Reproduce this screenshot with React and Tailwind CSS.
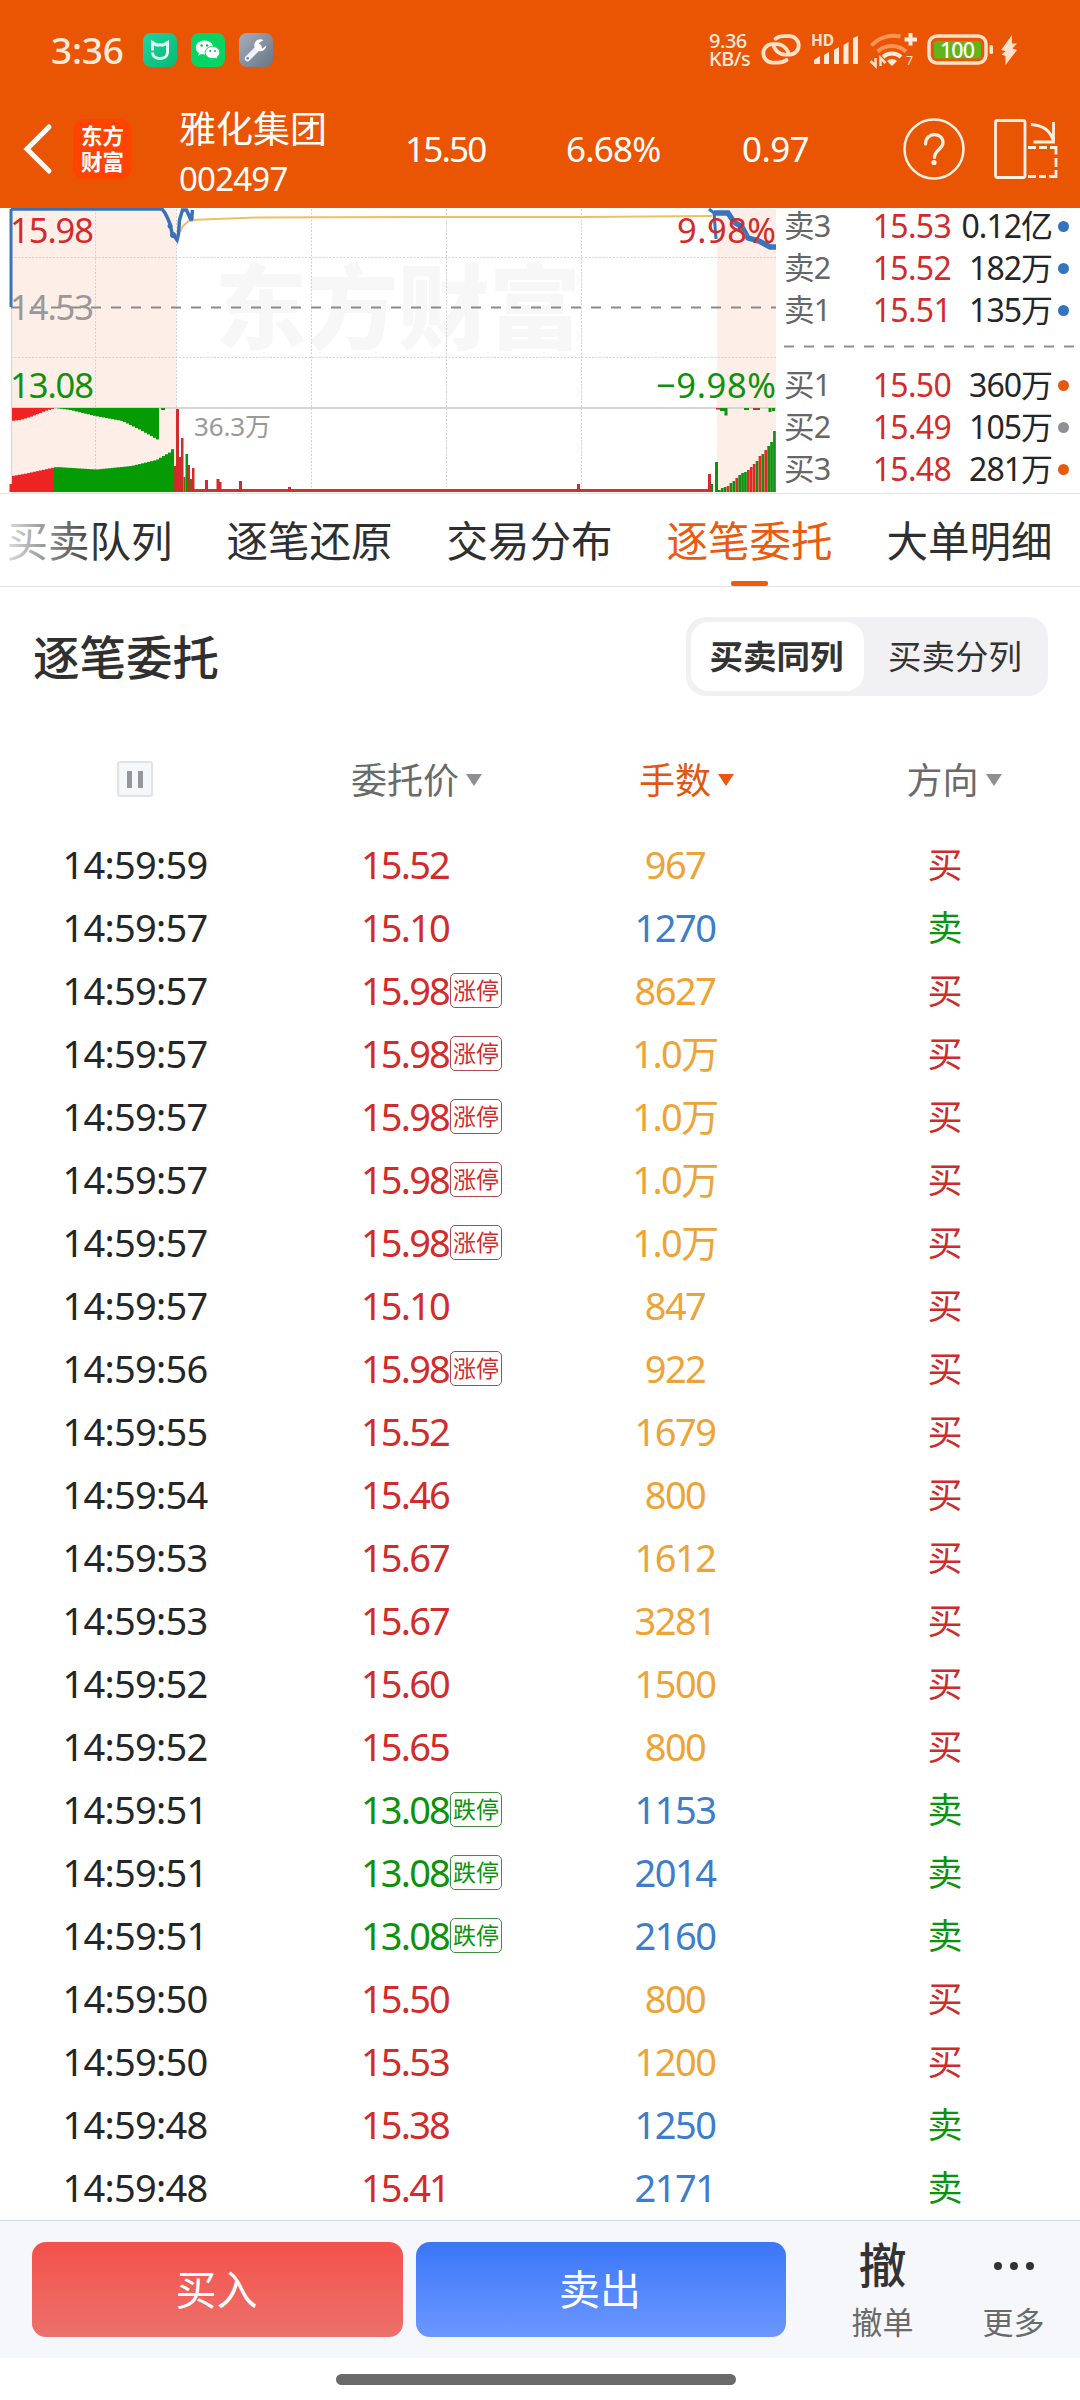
import React from "react";

const RED = "#d32b2b";
const GREEN = "#0b930b";

const orders = [
  ["14:59:59", "15.52", "", "967", "买"],
  ["14:59:57", "15.10", "", "1270", "卖"],
  ["14:59:57", "15.98", "涨停", "8627", "买"],
  ["14:59:57", "15.98", "涨停", "1.0万", "买"],
  ["14:59:57", "15.98", "涨停", "1.0万", "买"],
  ["14:59:57", "15.98", "涨停", "1.0万", "买"],
  ["14:59:57", "15.98", "涨停", "1.0万", "买"],
  ["14:59:57", "15.10", "", "847", "买"],
  ["14:59:56", "15.98", "涨停", "922", "买"],
  ["14:59:55", "15.52", "", "1679", "买"],
  ["14:59:54", "15.46", "", "800", "买"],
  ["14:59:53", "15.67", "", "1612", "买"],
  ["14:59:53", "15.67", "", "3281", "买"],
  ["14:59:52", "15.60", "", "1500", "买"],
  ["14:59:52", "15.65", "", "800", "买"],
  ["14:59:51", "13.08", "跌停", "1153", "卖"],
  ["14:59:51", "13.08", "跌停", "2014", "卖"],
  ["14:59:51", "13.08", "跌停", "2160", "卖"],
  ["14:59:50", "15.50", "", "800", "买"],
  ["14:59:50", "15.53", "", "1200", "买"],
  ["14:59:48", "15.38", "", "1250", "卖"],
  ["14:59:48", "15.41", "", "2171", "卖"],
];

const asks = [
  ["卖3", "15.53", "0.12亿", "bg-[#3473be]"],
  ["卖2", "15.52", "182万", "bg-[#3473be]"],
  ["卖1", "15.51", "135万", "bg-[#3473be]"],
];

const bids = [
  ["买1", "15.50", "360万", "bg-[#e65a0c]"],
  ["买2", "15.49", "105万", "bg-[#8f8f96]"],
  ["买3", "15.48", "281万", "bg-[#e65a0c]"],
];

const tabs = ["买卖队列", "逐笔还原", "交易分布", "逐笔委托", "大单明细"];

function StatusBar() {
  return (
    <div className="flex h-[100px] items-center pl-[51px] text-[#ffeadb]">
      <span className="w-[92px] text-[37px] font-medium tracking-[-0.2px]">3:36</span>
      <div className="flex gap-[14px]">
        <svg width="34" height="34" viewBox="0 0 34 34">
          <defs>
            <linearGradient id="mi" x1="0" y1="0" x2="1" y2="1">
              <stop offset="0" stopColor="#1fd5a0" />
              <stop offset="1" stopColor="#08b872" />
            </linearGradient>
          </defs>
          <rect width="34" height="34" rx="8" fill="url(#mi)" />
          <path d="M9.500 17.500V9.500l4 2.500h7l4-2.500v8" fill="none" stroke="#dffff3" strokeWidth="3" />
          <path d="M9.500 19.500c.5 8 14.500 8 15 0v-3" fill="none" stroke="#dffff3" strokeWidth="3" />
        </svg>
        <svg width="34" height="34" viewBox="0 0 34 34">
          <rect width="34" height="34" rx="8" fill="#07d563" />
          <path d="M13.500 7.500c-5 0-8.700 3.200-8.700 7 0 2.400 1.300 4.300 3.200 5.500l-.8 2.700 3.200-1.600c1 .3 2 .4 3.100.4 5 0 8.700-3 8.700-7s-3.700-7-8.700-7z" fill="#fff" />
          <path d="M21.500 13.500c-4.200 0-7.300 2.600-7.300 6s3.100 6.100 7.300 6.100c1 0 1.900-.2 2.700-.4l2.500 1.300-.6-2.200c1.700-1.100 2.700-2.800 2.700-4.800 0-3.400-3.100-6-7.300-6z" fill="#fff" stroke="#07d563" strokeWidth="1" />
          <g fill="#08b957">
            <circle cx="10.600" cy="12.500" r="1.200" />
            <circle cx="16.200" cy="12.500" r="1.200" />
            <circle cx="19.200" cy="18" r="1" />
            <circle cx="24" cy="18" r="1" />
          </g>
        </svg>
        <svg width="34" height="34" viewBox="0 0 34 34">
          <defs>
            <linearGradient id="tool" x1="0" y1="0" x2="1" y2="1">
              <stop offset="0" stopColor="#a9adba" />
              <stop offset="1" stopColor="#667586" />
            </linearGradient>
          </defs>
          <rect width="34" height="34" rx="8" fill="url(#tool)" />
          <path d="M8.500 25.500L20 14" stroke="#eef1f6" strokeWidth="5.500" strokeLinecap="round" />
          <path d="M24.500 7.200a6 6 0 1 0 2.800 5.300l-3.800 3-3.600-2.400.4-3.500z" fill="#fff" />
          <circle cx="8.700" cy="25.300" r="1.300" fill="#77808f" />
        </svg>
      </div>
      <div className="ml-[436px] flex h-[37px] w-[45px] flex-col text-[20px] font-medium leading-[18.500px] tracking-[-0.5px]">
        <span>9.36</span>
        <span>KB/s</span>
      </div>
      <svg className="ml-[5px]" width="264" height="40" viewBox="759 30 264 40">
        <g fill="none" stroke="#ffe0cb" strokeWidth="3.800" strokeLinecap="round">
          <path d="M775.500 38.800q3-2.600 8.500-2.600h5.500a9.200 9.200 0 0 1 0 18.400h-4.500q-7 0-11-7.500" />
          <path d="M786.500 60q-3 2.600-8.500 2.600h-5.500a9.200 9.200 0 0 1 0-18.400h4.500q7 0 11 7.500" />
        </g>
        <text x="811" y="46" fontSize="15.500" fontWeight="700" fill="#ffe0cb" textLength="23">HD</text>
        <g fill="#ffeadb">
          <path d="M814 60l6-4v8h-6zM824 55l5-3v12h-5zM834 50l5-3v17h-5zM843.500 45l5-3v22h-5zM853 38l5-2v28h-5z" />
          <path d="M887 61a7 7 0 0 1 10 0l-5 5z" />
        </g>
        <g fill="none" strokeWidth="4">
          <path d="M883 57a13 13 0 0 1 18 0" stroke="#ffeadb" />
          <path d="M877.500 51.500a21 21 0 0 1 28.500 0" stroke="#fb9459" />
          <path d="M871.500 45.500a30 30 0 0 1 29-9" stroke="#fb9459" />
          <path d="M910.500 33v12.500M904.500 39.500h12.500" stroke="#ffeadb" />
        </g>
        <path d="M870.500 61l5 5v-8M880.500 66v-8l5 5" stroke="#ffe0cb" strokeWidth="2.500" fill="none" />
        <text x="906" y="65" fontSize="12.500" fill="#ffe0cb">7</text>
        <rect x="929" y="36" width="57" height="27" rx="8" fill="none" stroke="#ffe0cb" strokeWidth="3.500" />
        <rect x="934" y="41" width="47" height="17.500" rx="3" fill="#63b418" />
        <rect x="989.500" y="45" width="3.500" height="9" rx="1.500" fill="#ffe0cb" />
        <text x="957.500" y="57.500" fontSize="21.500" fontWeight="500" textAnchor="middle" fill="#fff" textLength="35">100</text>
        <path d="M1012 35l-11 15 4.500 1-4 3.500 4 1.500v9l11.500-15-4.500-1.500 4.500-5h-5z" fill="#ffe0cb" />
      </svg>
    </div>
  );
}

function StockHeader() {
  return (
    <div className="flex h-[108px] items-center pb-[10px] text-white">
      <svg className="ml-[22px]" width="32" height="52" viewBox="0 0 32 52">
        <path d="M27 4L5 26l22 22" fill="none" stroke="#fff" strokeWidth="5" strokeLinecap="round" />
      </svg>
      <div className="ml-[19px] flex h-[60px] w-[59px] flex-col items-center justify-center rounded-[12px] bg-[#ff4300] text-[21.500px] font-bold leading-[26px]">
        <span>东方</span>
        <span>财富</span>
      </div>
      <div className="ml-[47px] flex w-[226px] flex-col pt-[9px]">
        <span className="text-[37px] leading-[48px]">雅化集团</span>
        <span className="pt-[3px] text-[33px] leading-[46px] tracking-[-0.8px]">002497</span>
      </div>
      <span className="w-[161px] text-[35px] tracking-[-1.800px]">15.50</span>
      <span className="w-[176px] text-[35px] tracking-[-0.8px]">6.68%</span>
      <span className="w-[160px] text-[35px] tracking-[-0.6px]">0.97</span>
      <svg width="160" height="66" viewBox="902 116 160 66">
        <circle cx="934" cy="149" r="29.500" fill="none" stroke="#fff0e4" strokeWidth="2.500" />
        <path d="M925.500 144c0-12.500 17.500-12 17.500-1.500 0 7-8.500 7-8.500 15" fill="none" stroke="#fff0e4" strokeWidth="3.200" strokeLinecap="round" />
        <circle cx="934" cy="162.500" r="2.600" fill="#fff0e4" />
        <g fill="none" stroke="#fff0e4" strokeWidth="2.800">
          <rect x="995.500" y="120.500" width="29.500" height="57" rx="2" />
          <path d="M1031 124.500q18 1 22 16M1053.500 122v20h-20" />
          <path d="M1028 147.500h8M1039 147.500h8M1050 147.500h6v7M1056 158v9M1056 170v6.500h-7M1046 176.500h-7M1036 176.500h-8" />
        </g>
      </svg>
    </div>
  );
}

// linear interpolation over [x, y] key points
function lerp(points, x) {
  for (let i = 1; i < points.length; i++) {
    const [x0, y0] = points[i - 1];
    const [x1, y1] = points[i];
    if (x <= x1) return y0 + ((y1 - y0) * (x - x0)) / (x1 - x0);
  }
  return points[points.length - 1][1];
}

const upperDepth = [[11, 13], [20, 12], [30, 9], [45, 3], [55, 0], [70, 2], [95, 8], [122, 13], [140, 22], [158, 32]];
const lowerTop = [[11, 476], [25, 473.500], [55, 467], [95, 469.500], [130, 466], [155, 460], [169, 452], [174, 445]];

function volumeBars() {
  const bars = [];
  for (let x = 12; x < 157; x += 3) {
    bars.push([x, 408, 3, lerp(upperDepth, x + 1), x < 52 ? "#ee2424" : "#049b04"]);
  }
  for (let x = 12; x < 174; x += 3) {
    const top = lerp(lowerTop, x);
    bars.push([x, top, 3, 492 - top, x < 54 ? "#ee2424" : "#049b04"]);
  }
  const tops = [490, 488, 487, 486, 483, 481, 478, 475, 473, 472, 470, 467, 464, 461, 456, 454, 450, 446, 442, 431];
  const colors = "gggrggrgggrrrgrgrggg";
  tops.forEach((top, i) => {
    bars.push([718 + i * 2.900, top, 2.700, 492 - top, colors[i] === "g" ? "#128f12" : "#e02a24"]);
  });
  return bars;
}

const spikes = [
  [9.500, 484, 2.500, "#ee2424"], [174, 466, 2, "#b53820"], [176, 409, 3, RED], [179, 457, 2, RED], [181, 438, 2.500, RED],
  [183.500, 477, 2, "#6b6510"], [185.500, 454, 2.500, GREEN], [188, 465, 2, RED], [190, 479, 2, "#6b6510"],
  [192, 468, 2.500, RED], [205, 480, 3, RED], [216.500, 479, 3, RED], [219, 482, 2.500, RED], [239, 481, 3, RED],
  [288, 487, 3, RED], [577, 484, 3, RED], [708, 474, 3, RED], [711, 484, 2, GREEN], [715, 462, 3, GREEN],
];

function TrendChart() {
  return (
    <svg width="776" height="285" viewBox="0 208 776 285" className="shrink-0" shapeRendering="auto">
      <rect x="11" y="209" width="165" height="284" fill="#fdeee7" />
      <rect x="717" y="209" width="59" height="284" fill="#fdeee7" />
      <text x="215" y="342" fontSize="92" fontWeight="900" fill="#f7f7f7" textLength="366">东方财富</text>
      <g stroke="#d2d2d2" strokeWidth="1" strokeDasharray="2 1.500">
        {[95.500, 176.500, 311.500, 446.500, 581.500].map((x) => (
          <path key={x} d={`M${x} 209V492`} />
        ))}
        <path d="M11 257.500H776M11 357.500H776" />
      </g>
      <path d="M11.500 209V492" stroke="#dcdcdc" strokeWidth="1.500" />
      <path d="M11 307.500H776" stroke="#8b8b8b" strokeWidth="2" strokeDasharray="10 10" />
      <path d="M11 408H776" stroke="#d6d6d6" strokeWidth="2" />
      {volumeBars().map(([x, y, w, h, fill], i) => (
        <rect key={i} x={x} y={y} width={w} height={h} fill={fill} />
      ))}
      <path d="M194 490.500H709" stroke="#cf3232" strokeWidth="3" />
      {spikes.map(([x, y, w, fill]) => (
        <rect key={x} x={x} y={y} width={w} height={492 - y} fill={fill} />
      ))}
      <path d="M161 408h4v2h-4zM720 408h5v3h-5zM724.500 408h3v7.500h-3zM744 408h5v2h-5zM757 408h3v2h-3zM768.500 408h3v4h-3zM772 408h3v3h-3z" fill={GREEN} />
      <path d="M716 408h4v1.500h-4zM753 408h4v2h-4z" fill={RED} />

      <path d="M180 232l3-6 5-4.500 8-1.800 20-.7 40-1.500 150-.5h174l132-1" fill="none" stroke="#edc062" strokeWidth="2" />
      <path d="M11 307V209" stroke="#3d74b9" strokeWidth="3" />
      <path d="M11 209H162l3 4 3 6 2 5 2 9 5 7 1.500-6 1-14 3-10h4l4 9h1l1-9" fill="none" stroke="#3a70b7" strokeWidth="3.500" />
      <circle cx="173" cy="235" r="3" fill="#3a70b7" />
      <circle cx="170" cy="226" r="2.500" fill="#3a70b7" />
      <circle cx="191" cy="218" r="2.500" fill="#3a70b7" />
      <path d="M709 209l5 4 2 26" fill="none" stroke="#3a70b7" strokeWidth="3" />
      <path d="M714 213h14l6 9 8 5 6 11 11 3 11 6h6" fill="none" stroke="#3a74bc" strokeWidth="5.500" />

      <g fontSize="34.500">
        <text x="10" y="243" fill={RED} textLength="84">15.98</text>
        <text x="10" y="320" fill="#999" textLength="84">14.53</text>
        <text x="10" y="398" fill={GREEN} textLength="84">13.08</text>
        <text x="677" y="243" fill={RED} textLength="99">9.98%</text>
        <text x="656" y="398" fill={GREEN} textLength="120">−9.98%</text>
      </g>
      <text x="194" y="436" fontSize="26" fill="#999" textLength="77">36.3万</text>
    </svg>
  );
}

function BookRow({ row }) {
  const [label, price, volume, dot] = row;
  return (
    <div className="flex h-[42px] items-center text-[32px] tracking-[-0.7px]">
      <span className="w-[62px] text-[30.500px] text-[#666]">{label}</span>
      <span className="w-[105px] text-right text-[#d32b2b]">{price}</span>
      <span className="w-[101px] whitespace-nowrap text-right tracking-[-1px] text-[#262626]">{volume}</span>
      <span className={`ml-[6px] h-[11px] w-[11px] rounded-full ${dot}`} />
    </div>
  );
}

function OrderBook() {
  return (
    <div className="flex w-[304px] flex-col pl-[8px]">
      <div className="-mt-[3px]">
        {asks.map((row) => (
          <BookRow key={row[0]} row={row} />
        ))}
      </div>
      <svg className="mt-[14px]" width="296" height="3">
        <path d="M0 1.500H296" stroke="#8f8f8f" strokeWidth="2" strokeDasharray="10 10" />
      </svg>
      <div className="mt-[16px]">
        {bids.map((row) => (
          <BookRow key={row[0]} row={row} />
        ))}
      </div>
    </div>
  );
}

function Tabs() {
  return (
    <div className="relative flex h-[94px] gap-[52px] overflow-hidden border-y border-[#e2e2e2] pl-[6px] text-[#2f2f2f]">
      {tabs.map((tab) => {
        const active = tab === "逐笔委托";
        return (
          <div
            key={tab}
            className={`relative flex h-[92px] w-[168px] shrink-0 items-center justify-center whitespace-nowrap pr-[1px] pt-[3px] text-[41.500px] ${active ? "text-[#ec5a10]" : ""}`}
          >
            {tab}
            {active && <span className="absolute bottom-0 h-[5px] w-[37px] rounded-[2px] bg-[#ee5a0e]" />}
          </div>
        );
      })}
      <div className="absolute left-0 top-0 h-[90px] w-[100px] bg-gradient-to-r from-white/90 to-white/0" />
    </div>
  );
}

function SortLabel({ text, active }) {
  return (
    <div className={`flex items-center justify-center text-[36px] ${active ? "text-[#e2560f]" : "text-[#6a6a6a]"}`}>
      <span className="relative">
        {text}
        <svg className="absolute -right-[23px] top-[20px]" width="16" height="12" viewBox="0 0 16 12">
          <path d="M0 0h16l-8 12z" fill={active ? "#e8590f" : "#8e8e93"} />
        </svg>
      </span>
    </div>
  );
}

function OrderRow({ row }) {
  const [time, price, badge, lots, side] = row;
  const down = badge === "跌停";
  const lotsColor = side === "买" ? "text-[#eea435]" : "text-[#3d7dcb]";
  return (
    <div className="grid h-[63px] grid-cols-4 items-center text-center text-[38px]">
      <span className="tracking-[-0.7px] text-[#262626]">{time}</span>
      <span className={`tracking-[-1.800px] ${down ? "text-[#0b930b]" : "text-[#d32b2b]"}`}>
        <span className="relative">
          {price}
          {badge && (
            <span
              className={`absolute left-[89px] top-[9px] flex h-[35px] w-[52px] items-center justify-center whitespace-nowrap rounded-[5px] border text-[23px] leading-none tracking-normal ${down ? "border-[#3f8f3f]" : "border-[#b04a4a]"}`}
            >
              {badge}
            </span>
          )}
        </span>
      </span>
      <span className={`tracking-[-1.500px] ${lotsColor}`}>{lots}</span>
      <span className={`pt-[2px] text-[35px] ${side === "买" ? "text-[#cf2b2b]" : "text-[#0b930b]"}`}>{side}</span>
    </div>
  );
}

function TradeBar() {
  return (
    <div className="flex h-[138px] border-t border-[#d4d7db] bg-[#f5f7fa] pl-[32px] pt-[21px]">
      <button className="h-[95px] w-[371px] rounded-[14px] bg-gradient-to-b from-[#f4504a] to-[#ec706b] pr-[2px] text-[41px] text-white">
        买入
      </button>
      <button className="ml-[13px] h-[95px] w-[370px] rounded-[14px] bg-gradient-to-b from-[#3b76f8] to-[#6b97ff] pr-[2px] text-[41px] text-white">
        卖出
      </button>
      <div className="ml-[31px] flex w-[131px] flex-col items-center">
        <span className="text-[48px] font-medium leading-[46px] text-[#333]">撤</span>
        <span className="pt-[14px] text-[31px] leading-[40px] text-[#6a6a6a]">撤单</span>
      </div>
      <div className="flex w-[131px] flex-col items-center">
        <div className="flex h-[48px] items-center gap-[8px]">
          <span className="h-[8px] w-[8px] rounded-full bg-[#333]" />
          <span className="h-[8px] w-[8px] rounded-full bg-[#333]" />
          <span className="h-[8px] w-[8px] rounded-full bg-[#333]" />
        </div>
        <span className="pt-[12px] text-[31px] leading-[40px] text-[#6a6a6a]">更多</span>
      </div>
    </div>
  );
}

export default function App() {
  return (
    <div className="flex h-[2400px] w-[1080px] flex-col overflow-hidden bg-white font-['Noto_Sans','Noto_Sans_CJK_SC',sans-serif]">
      <header className="h-[208px] bg-[#ea5504]">
        <StatusBar />
        <StockHeader />
      </header>
      <section className="flex h-[285px]">
        <TrendChart />
        <OrderBook />
      </section>
      <Tabs />
      <div className="flex h-[143px] items-center justify-between pl-[33px] pr-[32px]">
        <h1 className="pb-[2px] text-[46.500px] font-medium text-[#303030]">逐笔委托</h1>
        <div className="mb-[5px] flex h-[79px] w-[362px] items-center rounded-[20px] bg-[#f1f1f4] p-[5px] text-[33.500px] text-[#333]">
          <span className="flex h-[69px] w-[173px] items-center justify-center rounded-[18px] bg-white pr-[2px] font-bold">买卖同列</span>
          <span className="flex-1 pl-[3px] text-center">买卖分列</span>
        </div>
      </div>
      <div className="grid h-[103px] grid-cols-4 items-center pb-[2px]">
        <div className="flex justify-center pb-[3px]">
          <div className="flex h-[36px] w-[36px] items-center justify-center gap-[6px] rounded-[3px] border-2 border-[#e0e2e6] bg-[#f6f7f9]">
            <span className="h-[17px] w-[5px] bg-[#97979b]" />
            <span className="h-[17px] w-[5px] bg-[#97979b]" />
          </div>
        </div>
        <SortLabel text="委托价" />
        <SortLabel text="手数" active />
        <div className="pr-[5px]">
          <SortLabel text="方向" />
        </div>
      </div>
      <main className="h-[1387px]">
        {orders.map((row, i) => (
          <OrderRow key={i} row={row} />
        ))}
      </main>
      <TradeBar />
      <div className="flex flex-1 justify-center pr-[9px] pt-[16px]">
        <div className="h-[11px] w-[400px] rounded-full bg-[#6a6a6a]" />
      </div>
    </div>
  );
}
